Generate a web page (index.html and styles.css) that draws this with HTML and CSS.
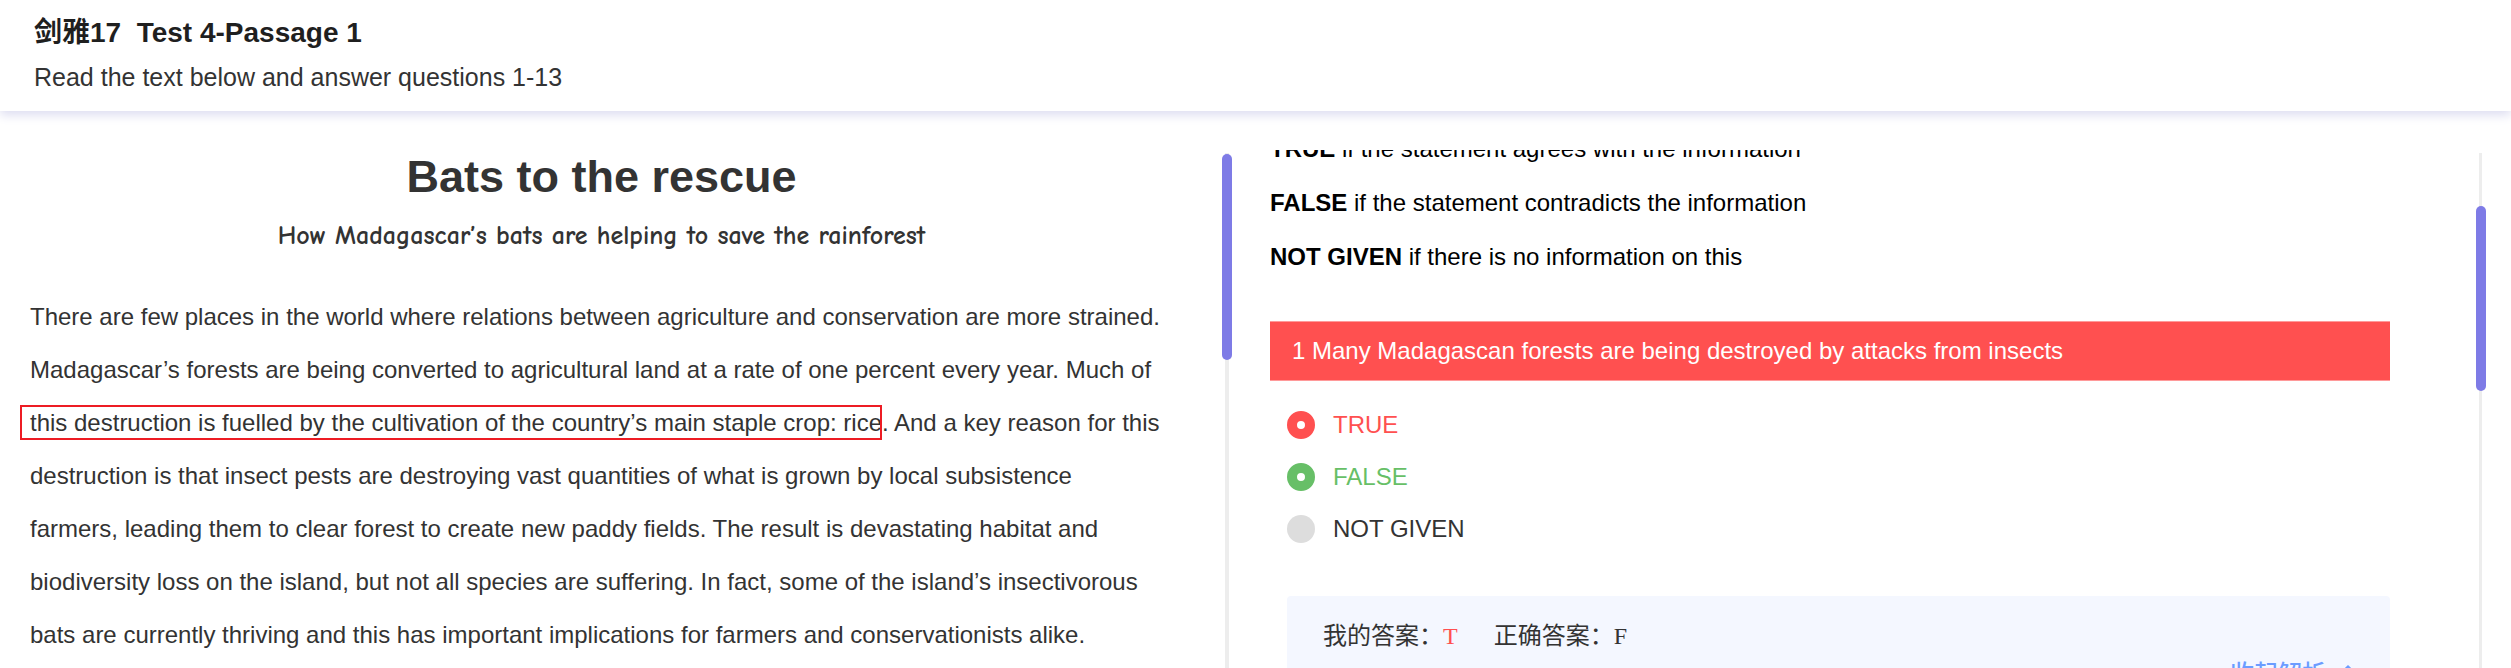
FILE: index.html
```html
<!DOCTYPE html>
<html lang="zh-CN">
<head>
<meta charset="utf-8">
<meta name="viewport" content="width=device-width, initial-scale=1">
<title>剑雅17 Test 4-Passage 1</title>
<link rel="stylesheet" href="styles.css">
</head>
<body>
<header class="header">
  <h1 class="header-title">剑雅17&nbsp; Test 4-Passage 1</h1>
  <p class="header-note">Read the text below and answer questions 1-13</p>
</header>
<main class="main">
  <section class="pane">
    <article class="passage">
      <h2 class="passage-title">Bats to the rescue</h2>
      <p class="passage-subtitle">How Madagascar’s bats are helping to save the rainforest</p>
      <p class="passage-text">There are few places in the world where relations between agriculture and conservation are more strained. Madagascar’s forests are being converted to agricultural land at a rate of one percent every year. Much of <span class="marked">this destruction is fuelled by the cultivation of the country’s main staple crop: rice</span>. And a key reason for this destruction is that insect pests are destroying vast quantities of what is grown by local subsistence farmers, leading them to clear forest to create new paddy fields. The result is devastating habitat and biodiversity loss on the island, but not all species are suffering. In fact, some of the island’s insectivorous bats are currently thriving and this has important implications for farmers and conservationists alike.</p>
    </article>
    <div class="track"><div class="thumb thumb-passage"></div></div>
  </section>
  <section class="pane">
    <div class="questions">
      <div class="questions-scrolled">
        <p class="rule"><strong>TRUE</strong> if the statement agrees with the information</p>
        <p class="rule"><strong>FALSE</strong> if the statement contradicts the information</p>
        <p class="rule"><strong>NOT GIVEN</strong> if there is no information on this</p>
        <h3 class="question">1 Many Madagascan forests are being destroyed by attacks from insects</h3>
        <div class="options">
          <label class="option option-wrong"><input class="radio" type="radio" name="q1" value="T" checked>TRUE</label>
          <label class="option option-right"><input class="radio" type="radio" name="q1" value="F">FALSE</label>
          <label class="option"><input class="radio" type="radio" name="q1" value="NG">NOT GIVEN</label>
        </div>
        <div class="answer">
          <p class="answer-line"><span>我的答案：<span class="answer-mine">T</span></span><span>正确答案：F</span></p>
          <button class="toggle" type="button">收起解析
            <svg class="chevron" viewBox="0 0 12 20" aria-hidden="true"><path d="M1 8 6 3l5 5" fill="none" stroke="currentColor" stroke-width="3"/></svg>
          </button>
        </div>
      </div>
    </div>
    <div class="track track-thin"><div class="thumb thumb-questions"></div></div>
  </section>
</main>
</body>
</html>
```

FILE: styles.css
```css
* {
  box-sizing: border-box;
}

body {
  margin: 0;
  height: 100vh;
  display: flex;
  flex-direction: column;
  overflow: hidden;
  background: #fff;
  color: #333;
  font-family: "Liberation Sans", Arial, "Noto Sans CJK SC", sans-serif;
  font-size: 24px;
}

h1, h2, h3, p {
  margin: 0;
}

.header {
  padding: 11px 34px 12px;
  box-shadow: 0 4px 10px #dcdcf0;
}

.header-title {
  color: #1f1f1f;
  font-size: 28px;
  line-height: 44px;
}

.header-note {
  font-size: 25px;
  line-height: 44px;
}

.main {
  flex: 1;
  min-height: 0;
  display: grid;
  grid-template-columns: 1229fr 1282fr;
  padding-top: 39px;
}

.pane {
  display: flex;
  min-width: 0;
  min-height: 0;
}

.passage {
  flex: 1;
  min-width: 0;
  overflow: hidden;
  padding-left: 20px;
  margin-right: 42px;
}

.passage-title {
  font-size: 45px;
  line-height: 54px;
  text-align: center;
}

.passage-subtitle {
  padding: 14px 0 36px;
  font-family: "Comic Sans MS", "Comic Neue", Lato, sans-serif;
  font-size: 26px;
  font-weight: 700;
  line-height: 36px;
  text-align: center;
}

.passage-text {
  padding: 0 20px 0 10px;
  line-height: 53px;
}

.marked {
  position: relative;
}

.marked::before {
  content: "";
  position: absolute;
  inset: -4px 0 -4px -10px;
  border: 2px solid #ed1c24;
}

.track {
  position: relative;
  flex: none;
  width: 4px;
  margin-top: 3px;
  background: #ededed;
}

.track-thin {
  width: 3px;
  margin-right: 29px;
}

.thumb {
  position: absolute;
  left: -3px;
  width: 10px;
  border-radius: 5px;
  background: #7e7be6;
}

.thumb-passage {
  top: 1px;
  height: 206px;
}

.thumb-questions {
  top: 53px;
  height: 185px;
}

.questions {
  flex: 1;
  min-width: 0;
  overflow: hidden;
  padding: 0 89px 0 41px;
}

.questions-scrolled {
  margin-top: -28px;
}

.rule {
  color: #000;
  line-height: 54px;
}

.question {
  margin-top: 37px;
  padding: 0 22px;
  border: 1px solid #ff9a9a;
  border-width: 1px 0;
  background: #ff5050;
  color: #fff;
  font-size: 24px;
  font-weight: 400;
  line-height: 58px;
}

.options {
  padding: 18px 17px 41px;
}

.option {
  display: flex;
  align-items: center;
  gap: 18px;
  height: 52px;
}

.radio {
  appearance: none;
  width: 28px;
  height: 28px;
  margin: 0;
  border-radius: 50%;
  background: #ddd;
}

.option-wrong {
  color: #ff5050;
}

.option-right {
  color: #67bf67;
}

.option-wrong .radio,
.option-right .radio {
  border: 10px solid;
  background: #fff;
  color: inherit;
}

.answer {
  display: flex;
  flex-direction: column;
  gap: 2px;
  margin-left: 17px;
  padding: 22px 36px;
  border-radius: 4px;
  background: #f4f7ff;
}

.answer-line {
  display: flex;
  gap: 36px;
  font-family: "Liberation Serif", "Songti SC", "Noto Sans CJK SC", serif;
  line-height: 36px;
}

.answer-mine {
  color: #ff5050;
}

.toggle {
  display: flex;
  align-items: center;
  gap: 16px;
  align-self: flex-end;
  padding: 0;
  border: 0;
  background: none;
  color: #6b9cff;
  font: inherit;
  font-weight: 500;
  line-height: 36px;
}

.chevron {
  width: 12px;
  height: 20px;
}
```
